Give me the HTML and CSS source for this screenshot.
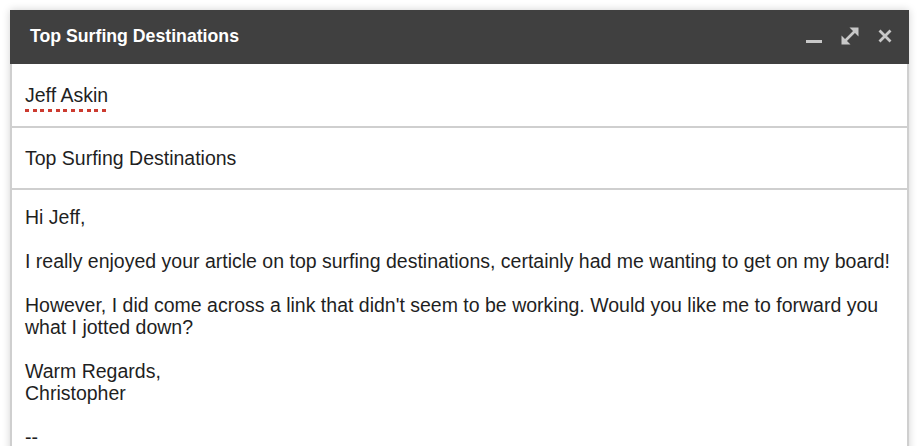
FILE: index.html
```html
<!DOCTYPE html>
<html>
<head>
<meta charset="utf-8">
<link rel="stylesheet" href="styles.css">
</head>
<body>
<div class="compose">
  <div class="titlebar">
    <div class="title">Top Surfing Destinations</div>
    <div class="controls">
      <svg class="ico" width="16" height="18" viewBox="0 0 16 18"><rect x="0" y="13" width="16" height="3" fill="#c8c8c8"/></svg>
      <svg class="ico" width="18" height="18" viewBox="0 0 18 18">
        <path d="M3.5 14.5 L14.5 3.5" stroke="#c8c8c8" stroke-width="2.6" fill="none"/>
        <path d="M8.5 0.5 H17.5 V9.5 Z" fill="#c8c8c8"/>
        <path d="M0.5 8.5 V17.5 H9.5 Z" fill="#c8c8c8"/>
      </svg>
      <svg class="ico" width="14" height="14" viewBox="0 0 14 14">
        <path d="M1.5 1.5 L12.5 12.5 M12.5 1.5 L1.5 12.5" stroke="#c8c8c8" stroke-width="2.8" fill="none"/>
      </svg>
    </div>
  </div>
  <div class="field"><span class="misspelled">Jeff Askin</span></div>
  <div class="field">Top Surfing Destinations</div>
  <div class="body">
    <p>Hi Jeff,</p>
    <p>I really enjoyed your article on top surfing destinations, certainly had me wanting to get on my board!</p>
    <p>However, I did come across a link that didn't seem to be working. Would you like me to forward you what I jotted down?</p>
    <p>Warm Regards,<br>Christopher</p>
    <p>--</p>
  </div>
</div>
</body>
</html>
```

FILE: styles.css
```css
html, body {
  margin: 0;
  padding: 0;
  background: #ffffff;
  overflow: hidden;
  height: 446px;
}
body {
  padding: 10px 0 0 10px;
  box-sizing: border-box;
  font-family: "Liberation Sans", Arial, sans-serif;
  color: #1f1f1f;
}
.compose {
  width: 899px;
  box-sizing: border-box;
  box-shadow: 0 0 8px rgba(0,0,0,0.18);
  background: #fff;
}
.titlebar {
  height: 54px;
  background: #404040;
  display: flex;
  align-items: center;
  justify-content: space-between;
  padding: 0 17px 0 20px;
}
.title {
  color: #ffffff;
  font-weight: bold;
  font-size: 17.7px;
  padding-bottom: 2px;
}
.controls {
  display: flex;
  align-items: center;
  gap: 19px;
  padding-bottom: 2px;
}
.ico { display: block; }
.field {
  height: 62px;
  border-left: 2px solid #cfcfcf;
  border-right: 2px solid #cfcfcf;
  border-bottom: 2px solid #cfcfcf;
  display: flex;
  align-items: center;
  padding-left: 13px;
  font-size: 19.5px;
  line-height: 22px;
}
.field + .field { height: 60px; }
.misspelled {
  padding-bottom: 6px;
  background: repeating-linear-gradient(to right, #cc3b30 0 4px, transparent 4px 7.7px) left bottom / 100% 3px no-repeat;
  position: relative;
  top: 3px;
}
.body {
  border-left: 2px solid #cfcfcf;
  border-right: 2px solid #cfcfcf;
  padding: 16px 13px 20px 13px;
  font-size: 19.5px;
  line-height: 22px;
}
.body p {
  margin: 0 0 22px 0;
}
```
